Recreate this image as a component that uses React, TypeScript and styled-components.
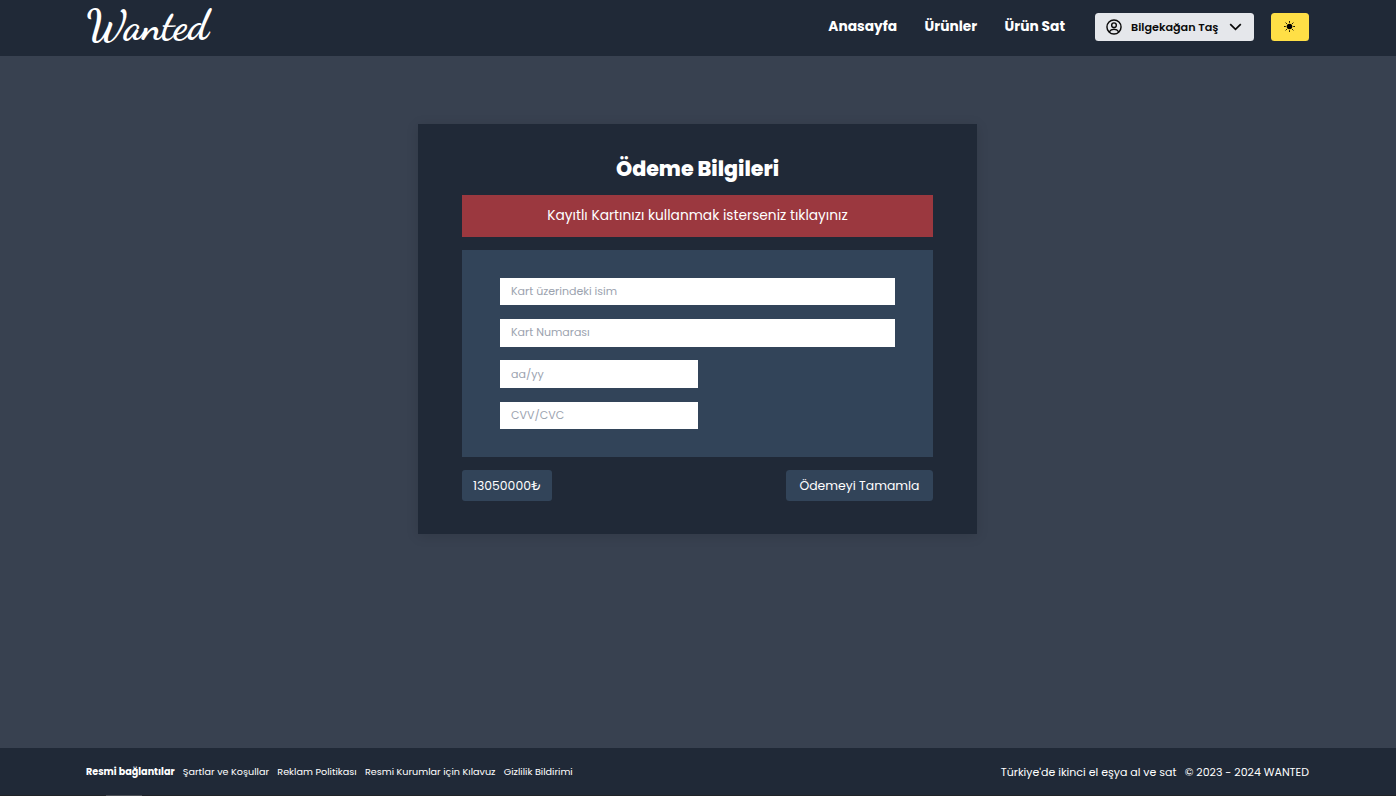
import React from "react";
import styled, { createGlobalStyle } from "styled-components";

const GlobalStyle = createGlobalStyle`
  *, *::before, *::after { box-sizing: border-box; }
  body { margin: 0; background: #374151; }
  body, button, input { font-family: Poppins, Inter, "Liberation Sans", sans-serif; }
`;

const colors = {
  surface: "#202937",
  page: "#384150",
  panel: "#324459",
  alert: "#9b383f",
  yellow: "#ffdf46",
};

const Page = styled.div`
  display: flex;
  flex-direction: column;
  height: 100vh;
  overflow: hidden;
  background: ${colors.page};
  color: #fff;
`;

const Header = styled.header`
  flex: none;
  display: flex;
  align-items: center;
  height: 56px;
  padding: 0 87px 2px 86px;
  background: ${colors.surface};
`;

const Logo = styled.a`
  margin: 0 auto 2px 0;
  font: 700 41.3px/52px "Dancing Script", "Liberation Serif", serif;
`;

const Nav = styled.nav`
  display: flex;
  gap: 27.5px;
  margin-right: 30px;
`;

const NavLink = styled.a`
  font-size: 13.75px;
  line-height: 20px;
  font-weight: 700;
  white-space: nowrap;
`;

const UserButton = styled.button`
  display: flex;
  align-items: center;
  width: 159px;
  height: 28px;
  margin-right: 17px;
  padding: 0 11px 0 10px;
  border: 0;
  border-radius: 3.5px;
  background: #e5e7eb;
  color: #0a0a0a;
  font-size: 11.2px;
  font-weight: 600;
  text-align: left;
  white-space: nowrap;
`;

const UserName = styled.span`
  width: 88px;
  margin: 0 10px 0 8px;
`;

const ThemeButton = styled.button`
  display: flex;
  align-items: center;
  justify-content: center;
  width: 38px;
  height: 28px;
  padding: 0 1px 1px 0;
  border: 0;
  border-radius: 3.5px;
  background: ${colors.yellow};
  color: #000;
`;

const Icon = styled.svg`
  display: block;
  flex: none;
`;

const Main = styled.main`
  flex: 1;
  display: flex;
  justify-content: center;
  align-items: flex-start;
  padding: 68px 1px 0 0;
`;

const Card = styled.section`
  display: flex;
  flex-direction: column;
  width: 559px;
  height: 410px;
  padding: 30px 44px 0;
  background: ${colors.surface};
  box-shadow: 0 2px 12px rgba(0, 0, 0, 0.12);
`;

const Title = styled.h1`
  margin: 0 0 11px;
  font-size: 20.64px;
  line-height: 30px;
  font-weight: 800;
  text-align: center;
`;

const SavedCard = styled.button`
  height: 42px;
  flex: none;
  padding: 0;
  border: 0;
  background: ${colors.alert};
  color: #fff;
  font-size: 13.75px;
  font-weight: 400;
`;

const Form = styled.form`
  display: flex;
  flex-direction: column;
  gap: 13.8px;
  height: 207px;
  flex: none;
  margin: 13px 0;
  padding: 27.9px 38px 0;
  background: ${colors.panel};
`;

const Field = styled.input<{ $half?: boolean }>`
  width: ${(p) => (p.$half ? "198px" : "100%")};
  height: 27.5px;
  padding: 0 11px;
  border: 0;
  border-radius: 0;
  background: #fff;
  color: #111827;
  font-size: 11.04px;
  &::placeholder { color: #9ca3af; opacity: 1; }
`;

const Actions = styled.div`
  display: flex;
  justify-content: space-between;
`;

const Total = styled.div`
  width: 90px;
  height: 31px;
  padding-left: 11px;
  border-radius: 3px;
  background: ${colors.panel};
  font-size: 12.4px;
  line-height: 31px;
  font-weight: 400;
  white-space: nowrap;
`;

const PayButton = styled.button`
  width: 147px;
  height: 31px;
  padding: 0;
  border: 0;
  border-radius: 3.5px;
  background: ${colors.panel};
  color: #fff;
  font-size: 12.4px;
  font-weight: 400;
`;

const Footer = styled.footer`
  flex: none;
  display: flex;
  align-items: center;
  justify-content: space-between;
  height: 47px;
  padding: 0 87px 0 86px;
  background: ${colors.surface};
`;

const FooterGroup = styled.div`
  display: flex;
  gap: 8.25px;
`;

const FooterLink = styled.a<{ $strong?: boolean }>`
  font-size: 9.63px;
  line-height: 16px;
  font-weight: ${(p) => (p.$strong ? 700 : 400)};
  white-space: nowrap;
`;

const FooterNote = styled.span`
  font-size: 11px;
  line-height: 16px;
  font-weight: 400;
  white-space: nowrap;
`;

const BottomEdge = styled.div`
  flex: none;
  height: 1px;
  padding-left: 106px;
  background: #202327;
`;

const EdgeMark = styled.div`
  width: 36px;
  height: 1px;
  background: #4b4e53;
`;

const rays = [0, 45, 90, 135, 180, 225, 270, 315];

const UserIcon = () => (
  <Icon width="18" height="18" viewBox="0 0 24 24" fill="none" stroke="currentColor" strokeWidth="1.9">
    <circle cx="12" cy="12" r="9.4" />
    <circle cx="12" cy="9.6" r="3.1" />
    <path d="M5.6 18.4c1.5-2.3 3.7-3.4 6.4-3.4s4.9 1.1 6.4 3.4" />
  </Icon>
);

const ChevronIcon = () => (
  <Icon width="13" height="8" viewBox="0 0 13 8" fill="none" stroke="currentColor" strokeWidth="1.7">
    <path d="M1.2 1.1 6.5 6.4l5.3-5.3" />
  </Icon>
);

const SunIcon = () => (
  <Icon width="12" height="12" viewBox="-5.5 -5.5 12 12">
    <circle r="2.8" fill="currentColor" />
    {rays.map((angle) => (
      <path key={angle} d="M0-3.7V-5.5" transform={`rotate(${angle})`} stroke="currentColor" strokeWidth=".9" />
    ))}
  </Icon>
);

export default function App() {
  return (
    <Page>
      <GlobalStyle />
      <Header>
        <Logo>Wanted</Logo>
        <Nav>
          <NavLink>Anasayfa</NavLink>
          <NavLink>Ürünler</NavLink>
          <NavLink>Ürün Sat</NavLink>
        </Nav>
        <UserButton>
          <UserIcon />
          <UserName>Bilgekağan Taş</UserName>
          <ChevronIcon />
        </UserButton>
        <ThemeButton aria-label="Tema">
          <SunIcon />
        </ThemeButton>
      </Header>
      <Main>
        <Card>
          <Title>Ödeme Bilgileri</Title>
          <SavedCard>Kayıtlı Kartınızı kullanmak isterseniz tıklayınız</SavedCard>
          <Form>
            <Field placeholder="Kart üzerindeki isim" />
            <Field placeholder="Kart Numarası" />
            <Field placeholder="aa/yy" $half />
            <Field placeholder="CVV/CVC" $half />
          </Form>
          <Actions>
            <Total>13050000₺</Total>
            <PayButton>Ödemeyi Tamamla</PayButton>
          </Actions>
        </Card>
      </Main>
      <Footer>
        <FooterGroup>
          <FooterLink $strong>Resmi bağlantılar</FooterLink>
          <FooterLink>Şartlar ve Koşullar</FooterLink>
          <FooterLink>Reklam Politikası</FooterLink>
          <FooterLink>Resmi Kurumlar için Kılavuz</FooterLink>
          <FooterLink>Gizlilik Bildirimi</FooterLink>
        </FooterGroup>
        <FooterGroup>
          <FooterNote>Türkiye'de ikinci el eşya al ve sat</FooterNote>
          <FooterNote>© 2023 - 2024 WANTED</FooterNote>
        </FooterGroup>
      </Footer>
      <BottomEdge>
        <EdgeMark />
      </BottomEdge>
    </Page>
  );
}
